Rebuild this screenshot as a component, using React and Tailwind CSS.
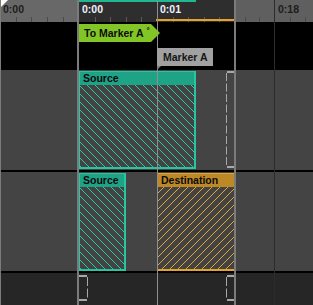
import React from 'react';

const FONT = "font-['Liberation_Sans',Arial,sans-serif]";

function Ticks({ xs, color, width }) {
  return (
    <svg className="absolute left-0 bottom-0" width={width} height="6">
      {xs.map((x) => {
        const px = Math.round(x) + 0.5;
        return <line key={x} x1={px} x2={px} y1="1" y2="6" stroke={color} strokeWidth="1" />;
      })}
    </svg>
  );
}

// dashed bracket, "[" opens to the right, "]" opens to the left
function Bracket({ side, height, className, color = '#a8a8a8', dash = '8 2.5' }) {
  const w = 9;
  const vx = side === 'open' ? 0.5 : w - 0.5;
  const barX = side === 'open' ? 1 : 0;
  return (
    <svg className={`absolute ${className}`} width={w} height={height}>
      <rect x={barX} y="0" width={w - 1} height="2" fill={color} />
      <line x1={vx} x2={vx} y1="2" y2={height - 2} stroke={color} strokeWidth="1" strokeDasharray={dash} />
      <rect x={barX} y={height - 2} width={w - 1} height="2" fill={color} />
    </svg>
  );
}

function Clip({ label, variant, className }) {
  const teal = variant === 'teal';
  return (
    <div
      className={`h-[98px] shrink-0 flex flex-col border-t border-l border-r-2 border-b-2 ${
        teal ? 'border-[#27c6a2]' : 'border-[#e4a22e]'
      } ${className}`}
    >
      <div
        className={`h-[13px] pl-[3px] text-[10.5px] font-bold leading-[13px] text-[#0a0a0a] whitespace-nowrap ${
          teal ? 'bg-[#1fa386]' : 'bg-[#bd8826]'
        }`}
      >
        {label}
      </div>
      <div
        className={`flex-1 bg-[#434343] ${
          teal
            ? 'bg-[image:repeating-linear-gradient(45deg,#2ac9a5_0px,#2ac9a5_1.1px,transparent_1.1px,transparent_5.66px)]'
            : 'bg-[image:repeating-linear-gradient(-45deg,#e6a530_0px,#e6a530_1.1px,transparent_1.1px,transparent_5.66px)]'
        }`}
      />
    </div>
  );
}

function SideColumn({ corner, rulerBg, label, labelPad, tickXs, withEdge, gridLine }) {
  return (
    <div className={`relative w-[77px] flex flex-col ${withEdge ? 'border-l border-[#7b7b7b]' : ''}`}>
      <div className={`relative h-[22px] ${rulerBg} text-[10.5px] font-bold leading-[10px] text-[#1c1c1c]`}>
        {corner && (
          <svg className="absolute left-0 top-0" width="7" height="7" viewBox="0 0 7 7">
            <path d="M0 0H7L0 7Z" fill="#ffffff" />
          </svg>
        )}
        <div className={`${labelPad} pt-[4px]`}>{label}</div>
        <Ticks xs={tickXs} color="#4a4a4a" width={77} />
      </div>
      <div className="h-[48px] bg-black" />
      <div className="h-[100px] bg-[#444444]" />
      <div className="h-[2px] bg-black" />
      <div className="h-[99px] bg-[#444444]" />
      <div className="h-[2px] bg-black" />
      <div className="h-[32px] bg-[#262626]" />
      {gridLine && <div className="absolute left-[38px] top-0 bottom-0 w-px bg-[#2c2c2c]" />}
    </div>
  );
}

export default function App() {
  const mainTicks = [15.6, 31.2, 46.8, 62.4, 93.6, 109.2, 124.8, 140.4];
  return (
    <div className={`w-[313px] h-[305px] flex overflow-hidden bg-black ${FONT}`}>
      <SideColumn
        corner
        rulerBg="bg-[#686868]"
        label="0:00"
        labelPad="pl-[2px]"
        tickXs={[14.5, 30, 46, 61.5]}
        withEdge
      />

      <div className="w-[2px] bg-[#7b7b7b]" />

      {/* main timeline */}
      <div className="relative w-[155px] flex flex-col overflow-hidden">
        <div className="relative h-[22px] bg-[#2e2e2e] flex text-[10.5px] font-bold leading-[10px] text-[#f0f3ff]">
          <div className="absolute left-0 top-0 h-[2px] w-[117px] bg-[#20b892]" />
          <div className="w-[78px] pl-[3px] pt-[4px]">0:00</div>
          <div className="w-[77px] pl-[3px] pt-[4px]">0:01</div>
          <Ticks xs={mainTicks} color="#5a5a5a" width={155} />
          <div className="absolute left-[77px] right-0 top-[19px] h-[2px] bg-[#e6a12d]" />
        </div>

        <div className="h-[48px] bg-black flex flex-col items-start pt-[2px] text-[10.5px] font-bold leading-[10px]">
          <div className="relative z-20 h-[18px] w-[81px] bg-[#82c527] [clip-path:polygon(0_0,72px_0,81px_9px,72px_18px,0_18px)] flex items-center pl-[5px] text-[#0c0c0c] whitespace-nowrap">
            To Marker A
            <span className="ml-[3px] -mt-[4px] text-[8px] leading-[8px]">°</span>
          </div>
          <div className="relative z-20 ml-[78px] mt-[6px]">
            <div className="h-[18px] w-[56px] bg-[#a1a1a1] pl-[6px] flex items-center text-[#161616] whitespace-nowrap">
              Marker A
            </div>
            <div className="h-[4px] w-[4px] bg-[#7e7e7e] [clip-path:polygon(0_0,100%_0,0_100%)]" />
          </div>
        </div>

        <div className="relative h-[100px] bg-[#444444] pt-[1px]">
          <Clip label="Source" variant="teal" className="w-[117px]" />
          <Bracket side="open" height={97} className="left-[147px] top-[1px]" />
        </div>
        <div className="h-[2px] bg-black" />

        <div className="h-[99px] bg-[#444444] pt-[1px] flex items-start">
          <Clip label="Source" variant="teal" className="w-[47px]" />
          <Clip label="Destination" variant="orange" className="ml-[31px] w-[80px]" />
        </div>
        <div className="h-[2px] bg-black" />

        <div className="relative h-[32px] bg-[#262626]">
          <Bracket side="close" height={26} className="left-0 top-[2px]" dash="9 2.5" />
          <Bracket side="open" height={26} className="left-[147px] top-[2px]" dash="9 2.5" />
        </div>

        {/* playhead / marker line */}
        <div className="absolute left-[78px] top-0 bottom-0 w-px bg-[#8f8f8f] z-10" />
      </div>

      <div className="w-[2px] bg-[#7b7b7b]" />

      <SideColumn
        rulerBg="bg-[#5f5f5f]"
        label="0:18"
        labelPad="pl-[42px]"
        tickXs={[8.5, 23, 53.5, 69]}
        gridLine
      />
    </div>
  );
}
